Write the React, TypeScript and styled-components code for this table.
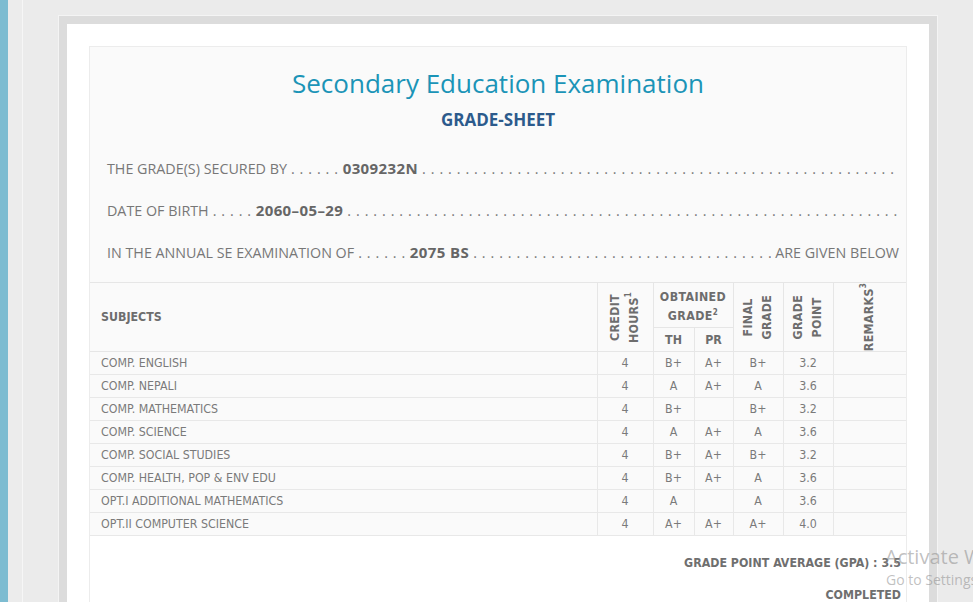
import React from "react";
import styled, { createGlobalStyle } from "styled-components";

const GlobalStyle = createGlobalStyle`
  html, body {
    margin: 0;
    padding: 0;
    height: 100%;
    overflow: hidden;
    background: #ebebeb;
  }
  #root {
    height: 100%;
  }
  *, *::before, *::after {
    box-sizing: border-box;
  }
`;

const Page = styled.div`
  display: flex;
  height: 100%;
  position: relative;
  overflow: hidden;
`;

const Strip = styled.div`
  width: 8px;
  flex: none;
  background: #7dbcd1;
`;

const Gutter = styled.div`
  width: 15px;
  flex: none;
  background: #ececec;
  border-right: 1px solid #f6f6f6;
`;

const Main = styled.div`
  flex: 1;
  padding: 16px 0 0 36px;
`;

const Frame = styled.div`
  width: 878px;
  border: 8px solid #dcdcdc;
  box-shadow: 0 0 0 1px #f4f4f4;
  background: #fff;
  padding: 22px;
`;

const Card = styled.div`
  border: 1px solid #ececec;
  background: #fff;
  height: 620px;
`;

const Head = styled.div`
  background: #fafafa;
  padding: 20px 7px 19px 17px;
  font-family: "Open Sans", "DejaVu Sans", sans-serif;
`;

const Title = styled.h1`
  margin: 0;
  text-align: center;
  font-size: 26px;
  font-weight: 400;
  color: #1b94b7;
  line-height: 32px;
  padding-right: 10px;
`;

const SubTitle = styled.h2`
  margin: 10px 0 0;
  text-align: center;
  font-size: 17px;
  font-weight: 700;
  color: #2c5a8c;
  line-height: 22px;
  padding-right: 10px;
`;

const InfoLine = styled.div<{ $first?: boolean }>`
  display: flex;
  align-items: baseline;
  height: 22px;
  margin-top: ${({ $first }) => ($first ? "26px" : "20px")};
  font-size: 14.3px;
  line-height: 22px;
  color: #777;
  white-space: nowrap;
`;

const Value = styled.span`
  font-weight: 700;
  font-size: 15px;
  line-height: 22px;
  letter-spacing: 0.4px;
  color: #666;
  margin-left: 4px;
`;

const Dots = styled.span<{ $fill?: boolean }>`
  flex: ${({ $fill }) => ($fill ? "1 1 0" : "none")};
  overflow: hidden;
  margin-left: 4px;
  letter-spacing: 0.6px;
  min-width: 0;
`;

const Table = styled.table`
  width: 100%;
  border-collapse: collapse;
  font-family: "DejaVu Sans Condensed", "DejaVu Sans", sans-serif;
  font-size: 12.3px;
  color: #7a7a7a;
  background: #fafafa;

  sup {
    font-size: 8px;
    line-height: 0;
    vertical-align: super;
  }
`;

const Th = styled.th<{ $left?: boolean; $w?: number }>`
  border: 1px solid #e6e6e6;
  font-weight: 700;
  color: #6d6d6d;
  padding: 0;
  text-align: ${({ $left }) => ($left ? "left" : "center")};
  padding-left: ${({ $left }) => ($left ? "11px" : "0")};
  width: ${({ $w }) => ($w ? `${$w}px` : "auto")};
  vertical-align: middle;
  &:first-child {
    border-left: none;
  }
  &:last-child {
    border-right: none;
  }
`;

const Vertical = styled.div`
  writing-mode: vertical-rl;
  transform: rotate(180deg);
  margin: 0 auto;
  line-height: 19px;
  letter-spacing: 0.3px;
  text-align: center;
`;

const TopHead = styled.div`
  height: 42px;
  line-height: 19px;
  letter-spacing: 0.4px;
  padding-top: 4px;
`;

const SubHead = styled.div`
  height: 22px;
  line-height: 22px;
`;

const Td = styled.td<{ $left?: boolean }>`
  border: 1px solid #e8e8e8;
  height: 23px;
  padding: 0;
  padding-left: ${({ $left }) => ($left ? "11px" : "0")};
  text-align: ${({ $left }) => ($left ? "left" : "center")};
  &:first-child {
    border-left: none;
  }
  &:last-child {
    border-right: none;
  }
`;

const Footer = styled.div`
  padding: 19px 5px 0 0;
  text-align: right;
  font-family: "DejaVu Sans Condensed", "DejaVu Sans", sans-serif;
  font-weight: 700;
  font-size: 12.3px;
  color: #6f6f6f;
  line-height: 16px;
`;

const FooterLine = styled.div<{ $gap?: number }>`
  margin-top: ${({ $gap }) => $gap ?? 0}px;
`;

const Watermark = styled.div`
  position: absolute;
  left: 885px;
  top: 543px;
  font-family: "Open Sans", "DejaVu Sans", sans-serif;
  color: rgba(140, 140, 140, 0.55);
  white-space: nowrap;
  pointer-events: none;
`;

const WmBig = styled.div`
  font-size: 20px;
  line-height: 27px;
`;

const WmSmall = styled.div`
  font-size: 14px;
  line-height: 20px;
  padding-left: 1px;
`;

type Row = { subject: string; th: string; pr: string; fin: string; gp: string };

const rows: Row[] = [
  { subject: "COMP. ENGLISH", th: "B+", pr: "A+", fin: "B+", gp: "3.2" },
  { subject: "COMP. NEPALI", th: "A", pr: "A+", fin: "A", gp: "3.6" },
  { subject: "COMP. MATHEMATICS", th: "B+", pr: "", fin: "B+", gp: "3.2" },
  { subject: "COMP. SCIENCE", th: "A", pr: "A+", fin: "A", gp: "3.6" },
  { subject: "COMP. SOCIAL STUDIES", th: "B+", pr: "A+", fin: "B+", gp: "3.2" },
  { subject: "COMP. HEALTH, POP & ENV EDU", th: "B+", pr: "A+", fin: "A", gp: "3.6" },
  { subject: "OPT.I ADDITIONAL MATHEMATICS", th: "A", pr: "", fin: "A", gp: "3.6" },
  { subject: "OPT.II COMPUTER SCIENCE", th: "A+", pr: "A+", fin: "A+", gp: "4.0" },
];

const DOTS = " .".repeat(200);

const App: React.FC = () => {
  return (
    <>
      <GlobalStyle />
      <Page>
        <Strip />
        <Gutter />
        <Main>
          <Frame>
            <Card>
              <Head>
                <Title>Secondary Education Examination</Title>
                <SubTitle>GRADE-SHEET</SubTitle>
                <InfoLine $first>
                  THE GRADE(S) SECURED BY
                  <Dots>. . . . . .</Dots>
                  <Value>0309232N</Value>
                  <Dots $fill>{DOTS}</Dots>
                </InfoLine>
                <InfoLine>
                  DATE OF BIRTH
                  <Dots>. . . . .</Dots>
                  <Value>2060–05–29</Value>
                  <Dots $fill>{DOTS}</Dots>
                </InfoLine>
                <InfoLine>
                  IN THE ANNUAL SE EXAMINATION OF
                  <Dots>. . . . . .</Dots>
                  <Value>2075 BS</Value>
                  <Dots $fill>{DOTS}</Dots>
                  <span>&nbsp;ARE GIVEN BELOW</span>
                </InfoLine>
              </Head>
              <Table>
                <thead>
                  <tr>
                    <Th $left rowSpan={2}>SUBJECTS</Th>
                    <Th rowSpan={2} $w={56}>
                      <Vertical>
                        CREDIT
                        <br />
                        HOURS<sup>1</sup>
                      </Vertical>
                    </Th>
                    <Th colSpan={2}>
                      <TopHead>
                        OBTAINED
                        <br />
                        GRADE<sup>2</sup>
                      </TopHead>
                    </Th>
                    <Th rowSpan={2} $w={50}>
                      <Vertical>
                        FINAL
                        <br />
                        GRADE
                      </Vertical>
                    </Th>
                    <Th rowSpan={2} $w={50}>
                      <Vertical>
                        GRADE
                        <br />
                        POINT
                      </Vertical>
                    </Th>
                    <Th rowSpan={2} $w={73}>
                      <Vertical>
                        REMARKS<sup>3</sup>
                      </Vertical>
                    </Th>
                  </tr>
                  <tr>
                    <Th $w={41}>
                      <SubHead>TH</SubHead>
                    </Th>
                    <Th $w={39}>
                      <SubHead>PR</SubHead>
                    </Th>
                  </tr>
                </thead>
                <tbody>
                  {rows.map((r) => (
                    <tr key={r.subject}>
                      <Td $left>{r.subject}</Td>
                      <Td>4</Td>
                      <Td>{r.th}</Td>
                      <Td>{r.pr}</Td>
                      <Td>{r.fin}</Td>
                      <Td>{r.gp}</Td>
                      <Td />
                    </tr>
                  ))}
                </tbody>
              </Table>
              <Footer>
                <FooterLine>GRADE POINT AVERAGE (GPA) : 3.5</FooterLine>
                <FooterLine $gap={16}>COMPLETED</FooterLine>
              </Footer>
            </Card>
          </Frame>
        </Main>
        <Watermark>
          <WmBig>Activate Windows</WmBig>
          <WmSmall>Go to Settings to activate Windows.</WmSmall>
        </Watermark>
      </Page>
    </>
  );
};

export default App;
